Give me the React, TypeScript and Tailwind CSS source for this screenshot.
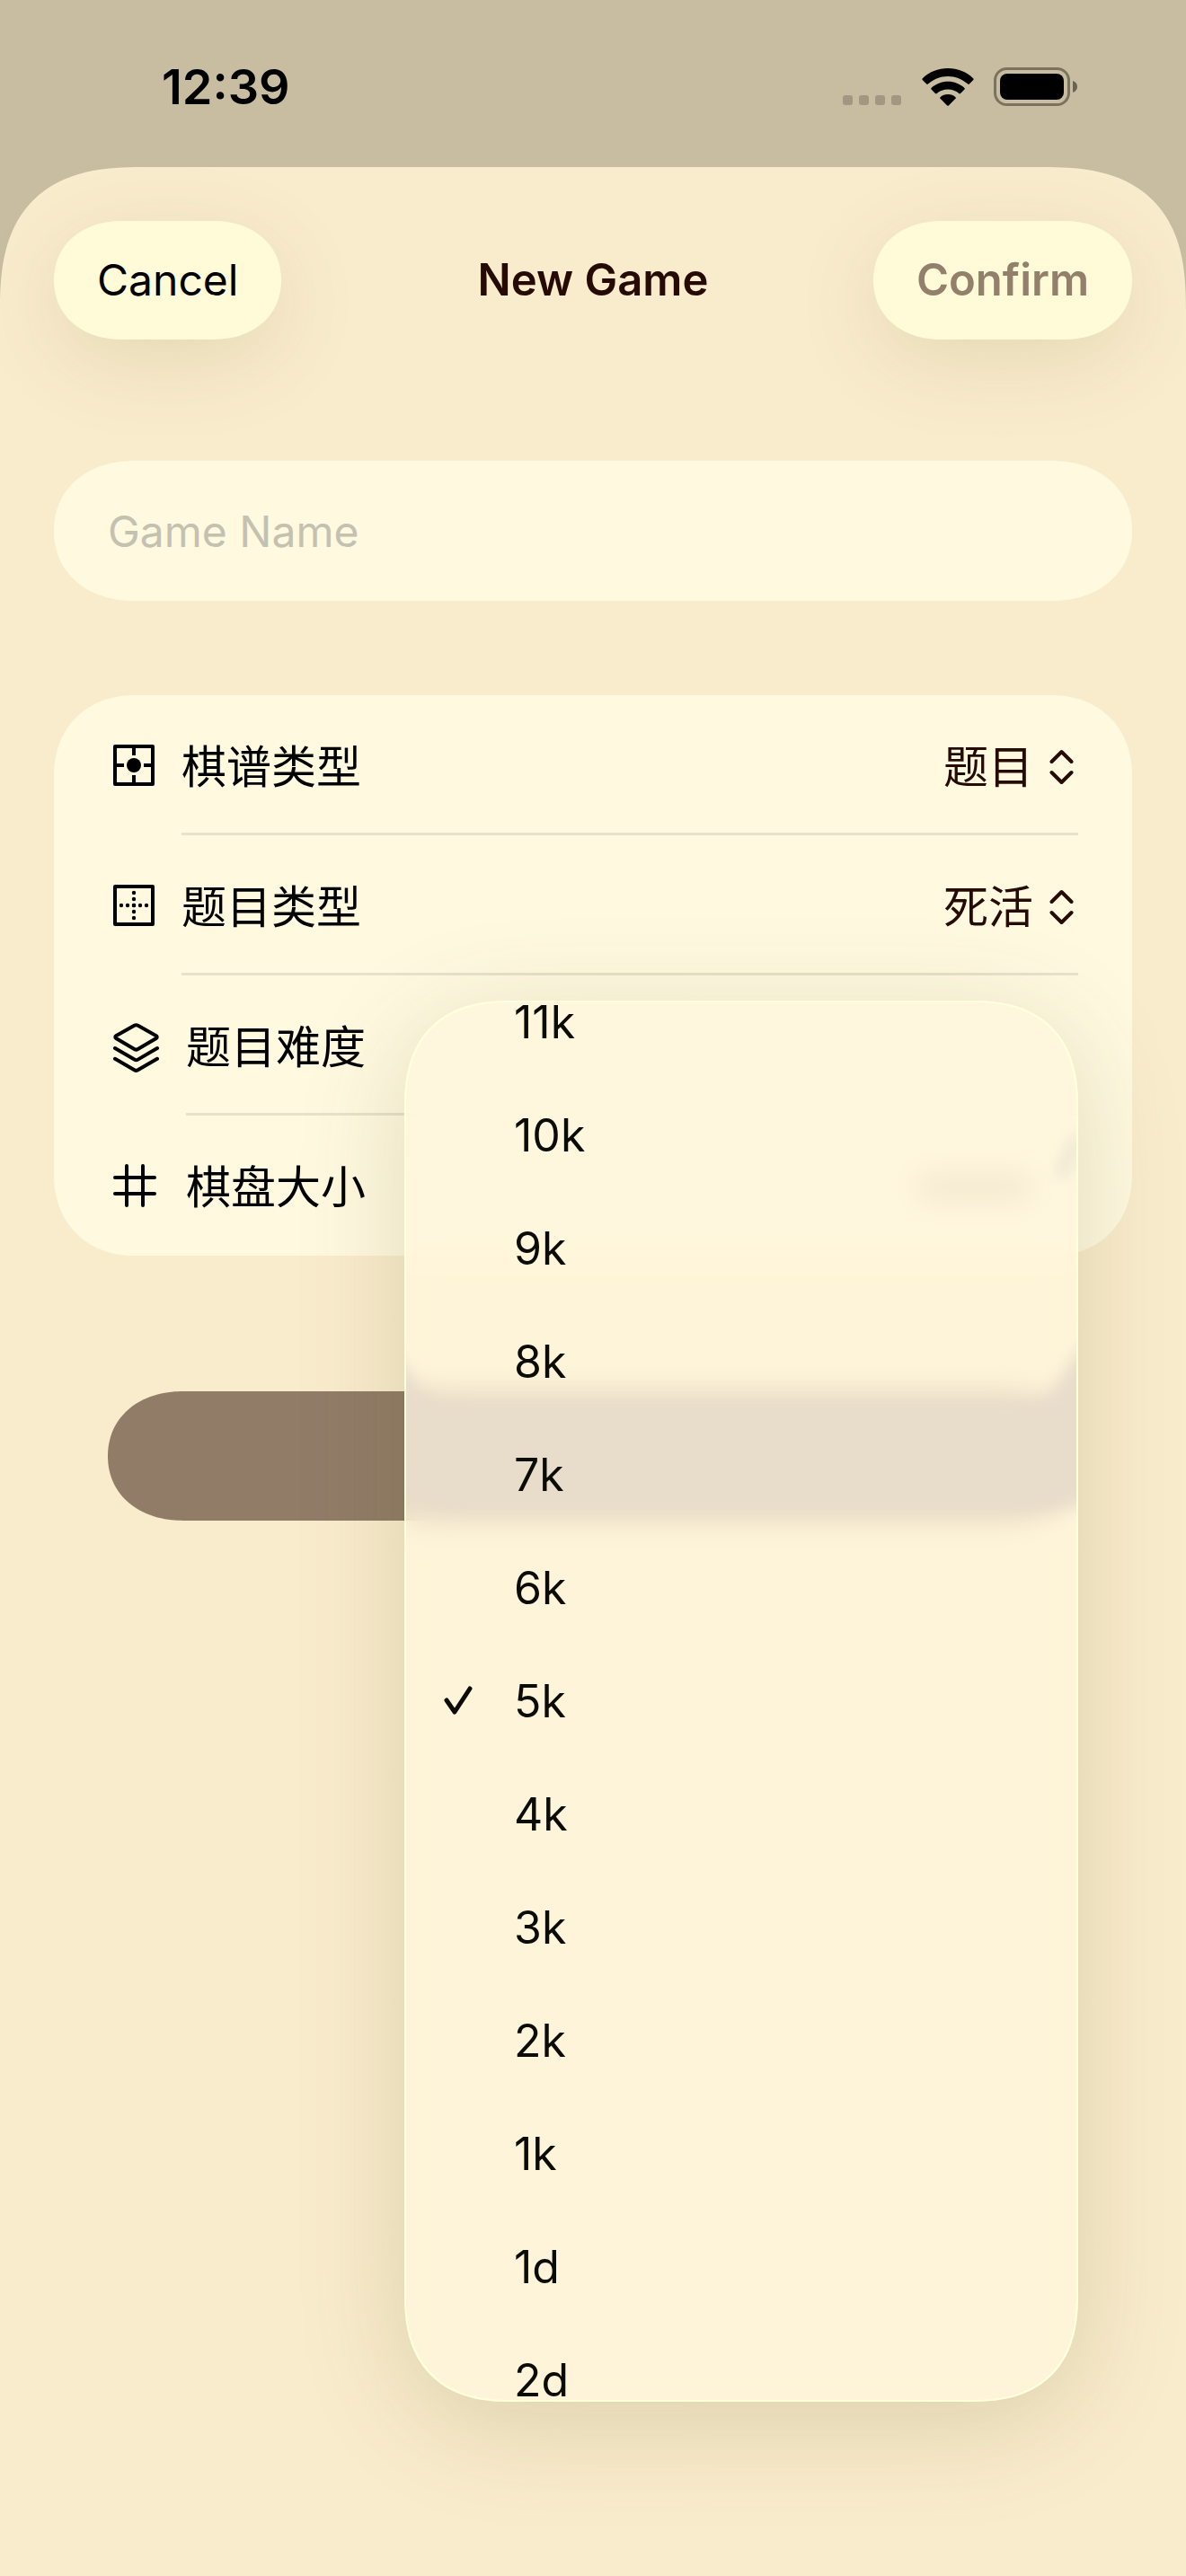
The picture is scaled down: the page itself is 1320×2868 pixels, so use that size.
import type { ReactNode } from "react";

const LEVELS = [
  "11k",
  "10k",
  "9k",
  "8k",
  "7k",
  "6k",
  "5k",
  "4k",
  "3k",
  "2k",
  "1k",
  "1d",
  "2d",
];

function StatusBar() {
  return (
    <div className="flex h-[186px] items-center justify-between pt-2 pr-[120px] pl-[180px]">
      <span className="text-[54px] leading-[60px] font-semibold text-black">
        12:39
      </span>
      <div className="flex items-center gap-[22px]">
        {/* No signal */}
        <svg width="66" height="42" viewBox="0 0 66 42" fill="#a19783">
          <rect x="0" y="30" width="11" height="11" rx="3" />
          <rect x="18" y="30" width="11" height="11" rx="3" />
          <rect x="36" y="30" width="11" height="11" rx="3" />
          <rect x="54" y="30" width="11" height="11" rx="3" />
        </svg>
        {/* Wifi */}
        <svg width="58" height="42" viewBox="0 0 58 42" fill="#000">
          <path d="M29 0C40 0 50 4 57.4 11.4Q58 12.3 57.3 13L52.8 17.6Q52 18.3 51.2 17.6C45 12 37.5 8.9 29 8.9S13 12 6.8 17.6Q6 18.3 5.2 17.6L.7 13Q0 12.3 .6 11.4C8 4 18 0 29 0Z" />
          <path d="M29 14.8C36 14.8 42.6 17.4 47.5 22Q48.2 22.7 47.5 23.5L43 28Q42.2 28.8 41.3 28C38 25 33.7 23.5 29 23.5S20 25 16.7 28Q15.8 28.8 15 28L10.5 23.5Q9.8 22.7 10.5 22C15.4 17.4 22 14.8 29 14.8Z" />
          <path d="M29 29C32.3 29 35.3 30.2 37.5 32.2Q38.2 33 37.5 33.8L29.8 41.5Q29 42.2 28.2 41.5L20.5 33.8Q19.8 33 20.5 32.2C22.7 30.2 25.7 29 29 29Z" />
        </svg>
        {/* Battery */}
        <svg width="94" height="44" viewBox="0 0 94 44">
          <rect
            x="1.5"
            y="1.5"
            width="82"
            height="40"
            rx="13"
            fill="none"
            stroke="#7b735f"
            strokeWidth="3"
          />
          <rect x="7" y="7" width="71" height="29" rx="8" fill="#000" />
          <path d="M88 15C91.2 16 93 18.5 93 21.5S91.2 27 88 28Z" fill="#6a6353" />
        </svg>
      </div>
    </div>
  );
}

function StoneIcon() {
  return (
    <svg width="46" height="46" viewBox="0 0 46 46" fill="none" stroke="#000" strokeWidth="4">
      <rect x="2" y="2" width="42" height="42" strokeLinejoin="round" />
      <path d="M23 2V12M23 34V44M2 23H12M34 23H44" />
      <circle cx="23" cy="23" r="8" fill="#000" stroke="none" />
    </svg>
  );
}

function DottedGridIcon() {
  const dots = [9, 16, 23, 30, 37];
  return (
    <svg width="46" height="46" viewBox="0 0 46 46" fill="#000">
      <rect
        x="2"
        y="2"
        width="42"
        height="42"
        fill="none"
        stroke="#000"
        strokeWidth="4"
        strokeLinejoin="round"
      />
      {dots.map((d) => (
        <circle key={`h${d}`} cx={d} cy="23" r="2.2" />
      ))}
      {dots.map((d) => (
        <circle key={`v${d}`} cx="23" cy={d} r="2.2" />
      ))}
    </svg>
  );
}

function LayersIcon() {
  return (
    <svg
      width="51"
      height="62"
      viewBox="0 -6 51 62"
      fill="none"
      stroke="#000"
      strokeWidth="4"
      strokeLinecap="round"
      strokeLinejoin="round"
    >
      <path d="M23.5 2.7Q25.5 1.6 27.5 2.7L47.5 14Q50 15.7 47.5 17.3L27.5 29Q25.5 30.2 23.5 29L3.5 17.3Q1 15.7 3.5 14Z" />
      <path d="M2 28L23.5 40.6Q25.5 41.8 27.5 40.6L49 28" />
      <path d="M2 39.8L23.5 52.3Q25.5 53.5 27.5 52.3L49 39.8" />
    </svg>
  );
}

function HashIcon() {
  return (
    <svg
      width="51"
      height="48"
      viewBox="0 0 51 48"
      fill="none"
      stroke="#000"
      strokeWidth="4"
      strokeLinecap="round"
    >
      <path d="M15 2V46M33 2V46M2 15H46M2 33H46" />
    </svg>
  );
}

function UpDownIcon() {
  return (
    <svg
      width="27"
      height="40"
      viewBox="0 0 27 40"
      fill="none"
      stroke="#260b05"
      strokeWidth="4"
      strokeLinecap="round"
      strokeLinejoin="round"
    >
      <path d="M2.5 14L13.5 3L24.5 14M2.5 26L13.5 37L24.5 26" />
    </svg>
  );
}

interface RowProps {
  icon: ReactNode;
  label: string;
  htmlFor?: string;
  last?: boolean;
  children?: ReactNode;
}

function Row({ icon, label, htmlFor, last, children }: RowProps) {
  return (
    <div className="flex h-[156px] items-center gap-[30px] pl-[6px]">
      {icon}
      <div
        className={`flex h-full flex-1 items-center justify-between border-b-[3px] pt-[6px] ${
          last ? "border-transparent" : "border-[#e8e2cc]"
        }`}
      >
        <label htmlFor={htmlFor} className="text-[50px] leading-[60px] text-black">
          {label}
        </label>
        {children}
      </div>
    </div>
  );
}

function Picker({ id, value }: { id: string; value: string }) {
  return (
    <div className="flex items-center gap-[18px] pr-[5px]">
      <select
        id={id}
        className="appearance-none bg-transparent text-[50px] leading-[60px] text-[#260b05] outline-none"
      >
        <option>{value}</option>
      </select>
      <UpDownIcon />
    </div>
  );
}

function CheckIcon() {
  return (
    <svg
      width="36"
      height="38"
      viewBox="0 0 36 38"
      fill="none"
      stroke="#0b0b08"
      strokeWidth="5"
      strokeLinecap="round"
      strokeLinejoin="round"
    >
      <path d="M5 18L14 31L31 5" />
    </svg>
  );
}

function LevelMenu({ selected }: { selected: string }) {
  return (
    <div
      role="listbox"
      aria-label="题目难度"
      className="absolute top-7 right-0 z-10 flex h-[1560px] w-[750px] flex-col justify-center overflow-hidden rounded-[120px] border-2 border-[#ffffdb] bg-[#fff6dc]/80 shadow-[0_24px_120px_rgba(90,75,20,0.18)] backdrop-blur-[17px] [corner-shape:superellipse(1.3)]"
    >
      {/* Light bending at the edges of the glass */}
      <svg
        aria-hidden="true"
        viewBox="0 0 746 260"
        className="absolute inset-x-0 top-[360px] -z-10 w-full overflow-visible blur-[9px]"
      >
        <path
          d="M-20 20L10 62Q24 84 60 84H690Q712 84 722 66L770 0V192Q730 208 690 208H50Q10 208 -20 176Z"
          fill="#e8dccb"
        />
        <path d="M728 -166L750 -212" stroke="#e9dfcf" strokeWidth="12" />
      </svg>
      {LEVELS.map((level) => (
        <button
          key={level}
          type="button"
          role="option"
          aria-selected={level === selected}
          className="flex h-[126px] shrink-0 items-center pl-10 text-left text-[50px] leading-[44px] text-[#0b0b08]"
        >
          <span className="flex w-20 shrink-0 items-center">
            {level === selected && <CheckIcon />}
          </span>
          {level}
        </button>
      ))}
    </div>
  );
}

export default function App() {
  return (
    <div className="flex min-h-screen flex-col bg-[#c8bda1] font-[Inter,'Noto_Sans_CJK_SC',sans-serif]">
      <StatusBar />

      <main className="flex-1 rounded-t-[160px] bg-[#f9eccd] px-[60px] pt-[60px] pb-[1100px] [corner-shape:superellipse(1.4)]">
        {/* Toolbar */}
        <header className="grid grid-cols-[1fr_auto_1fr] items-center">
          <button
            type="button"
            className="h-[132px] justify-self-start rounded-[76px/66px] bg-[#fffad7] px-12 text-[48px] leading-[60px] text-black shadow-[0_24px_96px_rgba(90,70,15,0.12)] [corner-shape:superellipse(1.1)]"
          >
            Cancel
          </button>
          <h1 className="text-[49px] leading-[60px] font-semibold text-[#260b05]">
            New Game
          </h1>
          <button
            type="button"
            disabled
            className="h-[132px] justify-self-end rounded-[76px/66px] bg-[#fffad7] px-12 text-[49px] leading-[60px] font-semibold text-[#92806c] shadow-[0_24px_96px_rgba(90,70,15,0.12)] [corner-shape:superellipse(1.1)]"
          >
            Confirm
          </button>
        </header>

        <input
          type="text"
          aria-label="Game Name"
          placeholder="Game Name"
          className="mt-[135px] block h-[156px] w-full rounded-[90px/78px] bg-[#fff9e0] px-[60px] text-[48px] leading-[60px] text-black outline-none [corner-shape:superellipse(1.1)] placeholder:text-[#c5c1b1]"
        />

        {/* Game options */}
        <section className="mt-[105px] rounded-[90px] bg-[#fff9e0] px-[60px] [corner-shape:superellipse(1.1)]">
          <Row icon={<StoneIcon />} label="棋谱类型" htmlFor="record-type">
            <Picker id="record-type" value="题目" />
          </Row>
          <Row icon={<DottedGridIcon />} label="题目类型" htmlFor="problem-type">
            <Picker id="problem-type" value="死活" />
          </Row>
          <div className="relative">
            <Row icon={<LayersIcon />} label="题目难度" />
            <LevelMenu selected="5k" />
          </div>
          <Row icon={<HashIcon />} label="棋盘大小" last>
            <div className="pr-[50px]">
              <div className="h-6 w-[130px] rounded-full bg-[#260b05]/40" />
            </div>
          </Row>
        </section>

        <div className="mt-[151px] px-[60px]">
          <button
            type="button"
            disabled
            aria-label="Create"
            className="block h-[144px] w-full rounded-[84px/72px] bg-[#917c68] [corner-shape:superellipse(1.1)]"
          />
        </div>
      </main>
    </div>
  );
}
